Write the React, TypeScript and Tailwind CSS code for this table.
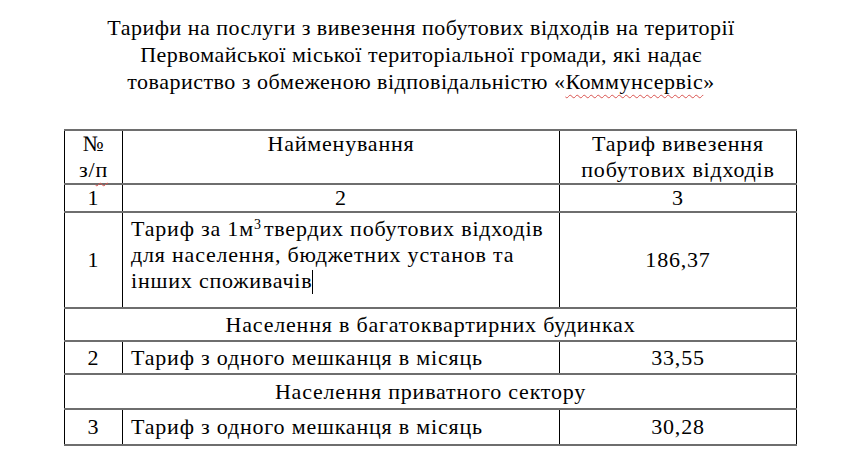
import React from 'react';

const serif = { fontFamily: '"Liberation Serif", "Times New Roman", serif' };

const rows = [
  {
    no: '2',
    section: 'Населення в багатоквартирних будинках',
    name: 'Тариф з одного мешканця в місяць',
    price: '33,55',
    sectionH: 'h-[33px]',
    rowH: 'h-[33px]',
  },
  {
    no: '3',
    section: 'Населення приватного сектору',
    name: 'Тариф з одного мешканця в місяць',
    price: '30,28',
    sectionH: 'h-[35px]',
    rowH: 'h-[36px]',
  },
];

const spell = 'underline decoration-wavy decoration-[#d9534f] decoration-1 underline-offset-[5px]';
const cell = 'border-x border-x-black border-y-2 border-y-[#6e6e6e] p-0';

const App = () => {
  return (
    <div className="w-[842px] h-[451px] overflow-hidden bg-white text-black" style={serif}>
      {/* Title */}
      <div className="pt-[14px] text-center text-[22px] leading-[27px] tracking-[0.5px]">
        <p>Тарифи на послуги з вивезення побутових відходів на території</p>
        <p>Первомайської міської територіальної громади, які надає</p>
        <p>
          товариство з обмеженою відповідальністю «<span className={spell}>Коммунсервіс</span>»
        </p>
      </div>

      {/* Tariffs table */}
      <div className="pl-[64px] pt-[34px]">
        <table className="w-[732px] border-collapse table-fixed text-[22px] leading-[26px] tracking-[0.8px] whitespace-nowrap">
          <colgroup>
            <col className="w-[58px]" />
            <col className="w-[437px]" />
            <col className="w-[237px]" />
          </colgroup>
          <tbody>
            <tr className="h-[53px]">
              <td className={`${cell} text-center align-top`}>
                №<br />
                з/<span className={spell}>п</span>
              </td>
              <td className={`${cell} text-center align-top`}>Найменування</td>
              <td className={`${cell} text-center align-top`}>
                Тариф вивезення
                <br />
                побутових відходів
              </td>
            </tr>
            <tr className="h-[28px]">
              <td className={`${cell} text-center`}>1</td>
              <td className={`${cell} text-center`}>2</td>
              <td className={`${cell} text-center`}>3</td>
            </tr>
            <tr>
              <td className={`${cell} text-center`}>1</td>
              <td className={`${cell} align-top !pl-[8px] !pt-[3px] !pb-[13px]`}>
                Тариф за 1м<sup className="text-[14px] tracking-normal pr-[3px]">3</sup>твердих побутових відходів
                <br />
                для населення, бюджетних установ та
                <br />
                інших споживачів
                <span className="inline-block w-px h-[24px] bg-black align-[-6px]" />
              </td>
              <td className={`${cell} text-center`}>186,37</td>
            </tr>
            {rows.map((r) => (
              <React.Fragment key={r.no}>
                <tr className={r.sectionH}>
                  <td colSpan={3} className={`${cell} text-center`}>
                    {r.section}
                  </td>
                </tr>
                <tr className={r.rowH}>
                  <td className={`${cell} text-center`}>{r.no}</td>
                  <td className={`${cell} !pl-[8px]`}>{r.name}</td>
                  <td className={`${cell} text-center`}>{r.price}</td>
                </tr>
              </React.Fragment>
            ))}
          </tbody>
        </table>
      </div>
    </div>
  );
};

export default App;
